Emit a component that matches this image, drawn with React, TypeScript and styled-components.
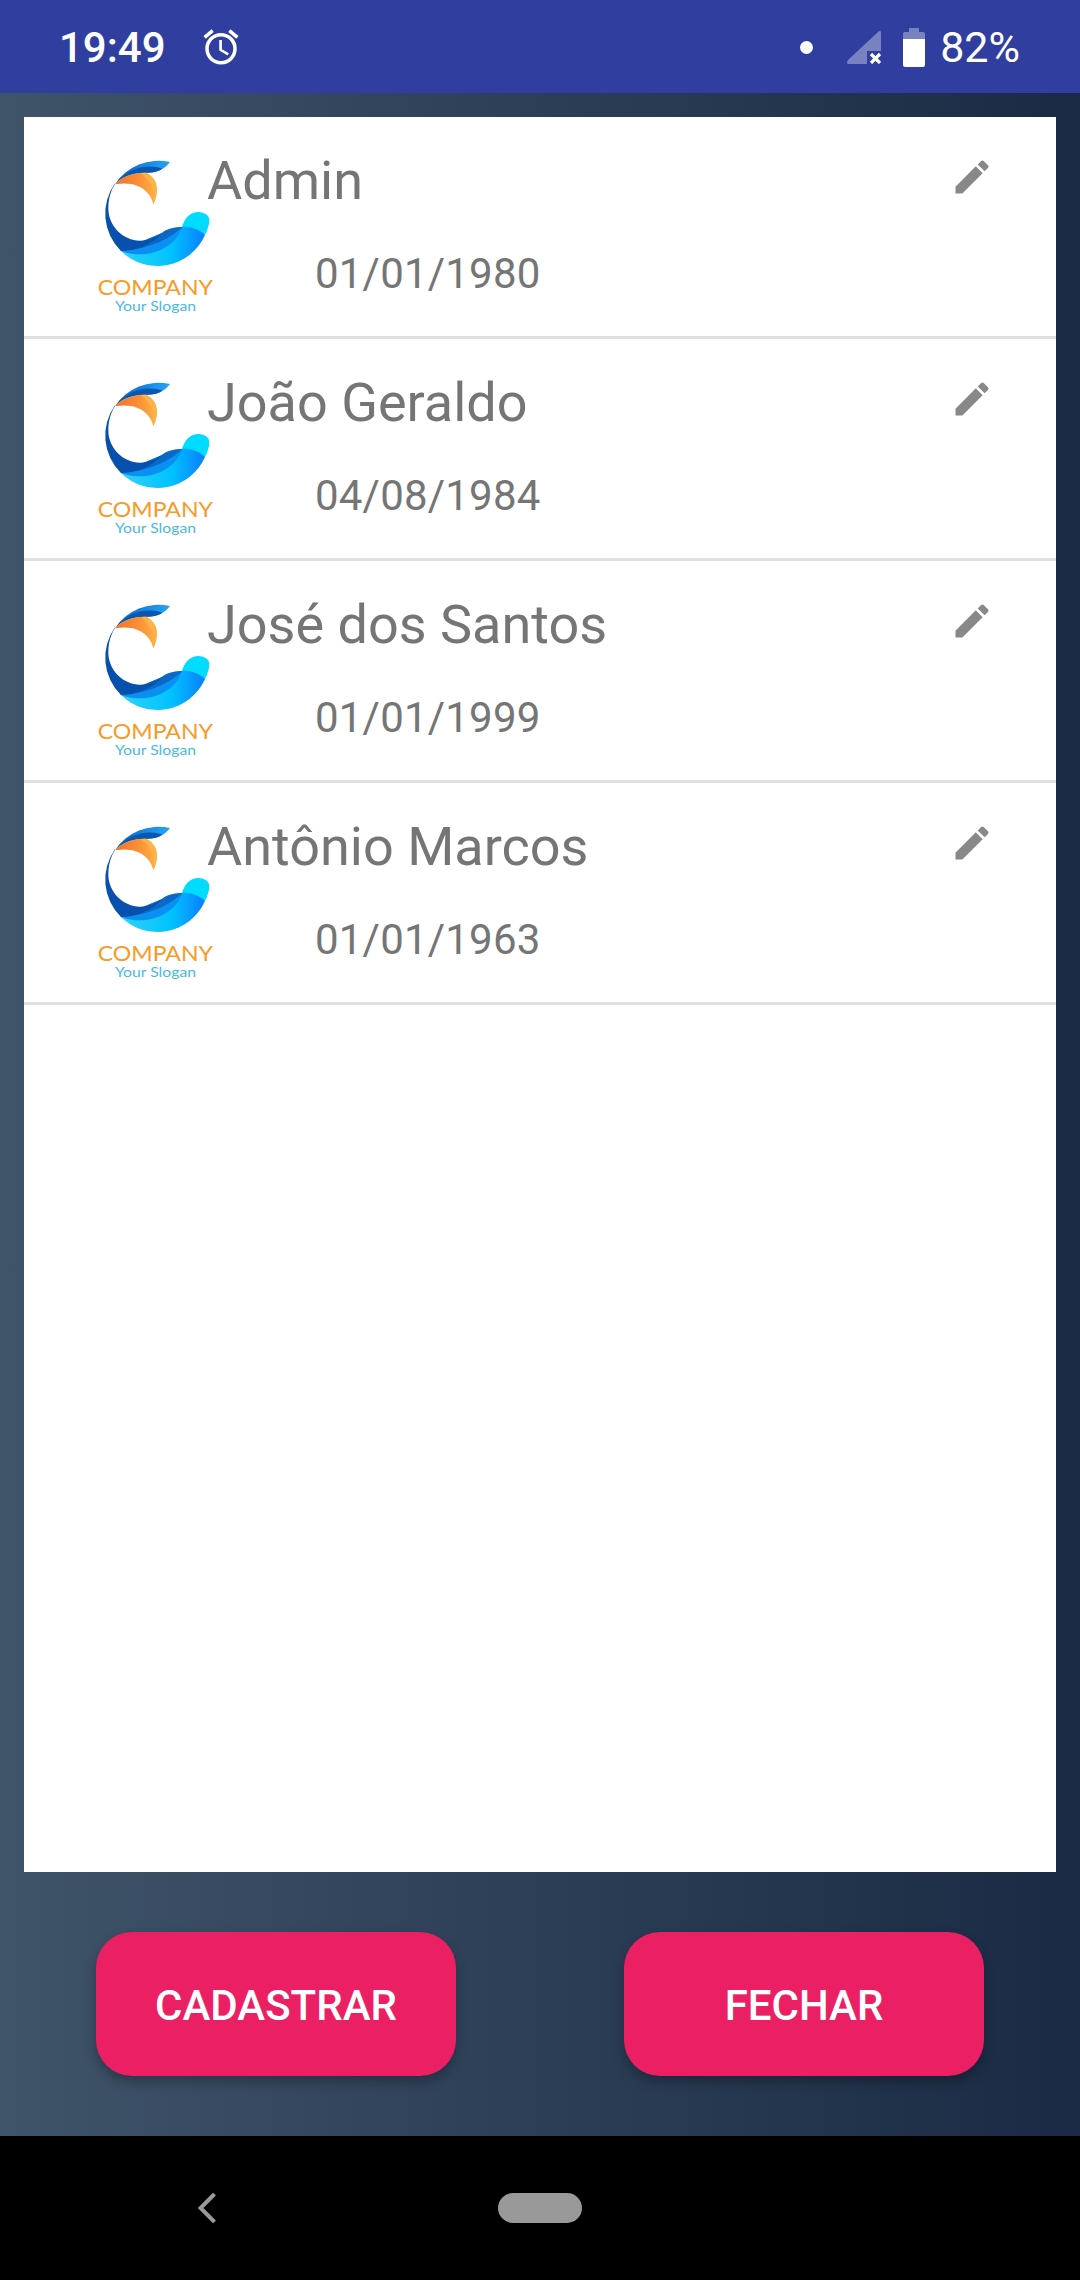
import React from 'react';
import styled, { createGlobalStyle } from 'styled-components';
import { MdAccessAlarm, MdEdit } from 'react-icons/md';

const GlobalStyle = createGlobalStyle`
  html, body {
    margin: 0;
    padding: 0;
    background: #000;
  }
  * {
    box-sizing: border-box;
  }
`;

const Screen = styled.div`
  display: flex;
  flex-direction: column;
  width: 1080px;
  height: 2280px;
  font-family: Roboto, sans-serif;
  overflow: hidden;
`;

const StatusBar = styled.div`
  display: flex;
  flex: none;
  align-items: center;
  justify-content: space-between;
  height: 93px;
  padding: 2px 60px 0 59px;
  background-color: #303f9f;
  color: #fff;
`;

const StatusGroup = styled.div`
  display: flex;
  align-items: center;
`;

const Time = styled.span`
  font-size: 42px;
  font-weight: 500;
  line-height: 49px;
`;

const AlarmIcon = styled(MdAccessAlarm)`
  margin-left: 34px;
  margin-top: -2px;
`;

const Dot = styled.span`
  width: 13px;
  height: 13px;
  margin-right: 34px;
  border-radius: 50%;
  background-color: #fff;
`;

const SignalIcon = styled.svg`
  width: 34px;
  height: 33px;
  margin-right: 22px;
`;

const BatteryIcon = styled.svg`
  width: 22px;
  height: 39px;
  margin-right: 15px;
`;

const Percent = styled.span`
  font-size: 43px;
  line-height: 49px;
`;

const Main = styled.div`
  display: flex;
  flex: 1;
  flex-direction: column;
  padding: 24px 24px 60px;
  background: linear-gradient(90deg, #3f5369 0%, #1a2a44 100%);
`;

const ListCard = styled.div`
  flex: 1;
  background-color: #fff;
`;

const Row = styled.div`
  display: flex;
  height: 222px;
  padding-left: 61px;
  border-bottom: 3px solid #e0e0e0;
`;

const LogoSvg = styled.svg`
  flex: none;
  width: 140px;
  height: 175px;
  margin-top: 28px;
  margin-right: -18px;
`;

const TextColumn = styled.div`
  display: flex;
  flex: 1;
  flex-direction: column;
  padding-top: 32px;
`;

const Name = styled.div`
  color: #757575;
  font-size: 54px;
  line-height: 63px;
`;

const BirthDate = styled.div`
  margin-top: 37px;
  margin-left: 108px;
  color: #757575;
  font-size: 42px;
  letter-spacing: 0.2px;
  line-height: 49px;
`;

const EditIcon = styled(MdEdit)`
  flex: none;
  margin-top: 38px;
  margin-right: 62px;
  color: #888;
`;

const Actions = styled.div`
  display: flex;
  flex: none;
  justify-content: space-between;
  margin-top: 60px;
  padding: 0 72px;
`;

const ActionButton = styled.button`
  width: 360px;
  height: 144px;
  padding: 2px 0 0;
  border: 0;
  border-radius: 36px;
  background-color: #eb2064;
  box-shadow: 0 6px 12px rgba(0, 0, 0, 0.28);
  color: #fff;
  font-family: Roboto, sans-serif;
  font-size: 42px;
  font-weight: 500;
`;

const NavBar = styled.div`
  display: flex;
  flex: none;
  align-items: center;
  height: 144px;
  padding-left: 198px;
  background-color: #000;
`;

const BackIcon = styled.svg`
  width: 18px;
  height: 30px;
`;

const HomePill = styled.div`
  width: 84px;
  height: 30px;
  margin-left: 282px;
  border-radius: 15px;
  background-color: #999;
`;

const users = [
  { name: 'Admin', date: '01/01/1980' },
  { name: 'João Geraldo', date: '04/08/1984' },
  { name: 'José dos Santos', date: '01/01/1999' },
  { name: 'Antônio Marcos', date: '01/01/1963' },
];

function CompanyLogo({ id }: { id: string }) {
  return (
    <LogoSvg viewBox="0 0 420 525">
      <defs>
        <linearGradient id={`${id}-top`} x1="0" y1="0" x2="1" y2="0">
          <stop offset="0" stopColor="#0b5cb4" />
          <stop offset="0.5" stopColor="#1583e0" />
          <stop offset="1" stopColor="#25a5f5" />
        </linearGradient>
        <linearGradient id={`${id}-orange`} x1="0" y1="0" x2="1" y2="0">
          <stop offset="0" stopColor="#f4702b" />
          <stop offset="0.55" stopColor="#f98f35" />
          <stop offset="1" stopColor="#fdb347" />
        </linearGradient>
        <linearGradient id={`${id}-wave`} x1="0" y1="0" x2="1" y2="0">
          <stop offset="0" stopColor="#2fd4f5" />
          <stop offset="0.6" stopColor="#00c2ff" />
          <stop offset="1" stopColor="#0a7eff" />
        </linearGradient>
      </defs>
      <path d="M290 248 C298 222 312 203 338 201 C352 200 373 208 373 225 C373 240 367 256 360 270 Z" fill="#00dcff" />
      <path d="M108 318 A156 156 0 0 0 360 270 C340 252 315 243 290 246 L230 265 Z" fill={`url(#${id}-wave)`} />
      <path d="M108 318 C170 342 262 325 292 247 C265 247 245 252 230 265 Z" fill="#0a90f2" />
      <path d="M105 316 C160 318 235 298 292 247 C265 247 245 252 230 265 Z" fill="#0b68c6" />
      <path
        d="M90 115 A156 156 0 0 0 108 318 C150 318 200 300 232 264 C215 276 195 287 165 287 C115 287 70 245 70 190 C70 160 78 135 90 118 Z"
        fill="#0750ae"
      />
      <path
        d="M255 51 A156 156 0 0 0 90 118 C110 95 145 82 182 83 C215 84 238 74 255 51 Z"
        fill={`url(#${id}-top)`}
      />
      <path d="M232 71 C195 58 140 62 94 112 C115 92 148 83 182 83 C202 84 220 79 232 71 Z" fill="#0b56b0" />
      <path
        d="M90 118 C110 95 145 82 182 83 C212 95 228 130 205 178 C198 145 165 105 90 118 Z"
        fill={`url(#${id}-orange)`}
      />
      <path d="M182 83 C212 95 228 130 205 178 C212 140 200 105 165 84 Z" fill="#fdb347" />
      <text
        x="38"
        y="449"
        textLength="346"
        lengthAdjust="spacingAndGlyphs"
        fill="#f99a26"
        fontFamily="Lato, sans-serif"
        fontSize="64"
      >
        COMPANY
      </text>
      <text
        x="90"
        y="499"
        textLength="243"
        lengthAdjust="spacingAndGlyphs"
        fill="#4ab9e2"
        fontFamily="Lato, sans-serif"
        fontSize="39"
      >
        Your Slogan
      </text>
    </LogoSvg>
  );
}

function App() {
  return (
    <Screen>
      <GlobalStyle />
      <StatusBar>
        <StatusGroup>
          <Time>19:49</Time>
          <AlarmIcon size={42} />
        </StatusGroup>
        <StatusGroup>
          <Dot />
          <SignalIcon viewBox="0 0 34 33">
            <path
              d="M33 0 Q34 0 34 1 L34 20 L20 20 L20 33 L1 33 Q-1 32 1 29 L31 1 Q32 0 33 0 Z"
              fill="#fff"
              fillOpacity="0.35"
            />
            <path d="M24 23 L33 32 M33 23 L24 32" stroke="#fff" strokeWidth="3.2" />
          </SignalIcon>
          <BatteryIcon viewBox="0 0 22 39">
            <path d="M6 0 H16 V4 H20 Q22 4 22 6 V11 H0 V6 Q0 4 2 4 H6 Z" fill="#fff" fillOpacity="0.35" />
            <path d="M0 11 H22 V37 Q22 39 20 39 H2 Q0 39 0 37 Z" fill="#fff" />
          </BatteryIcon>
          <Percent>82%</Percent>
        </StatusGroup>
      </StatusBar>

      <Main>
        <ListCard>
          {users.map((user, index) => (
            <Row key={user.name}>
              <CompanyLogo id={`logo-${index}`} />
              <TextColumn>
                <Name>{user.name}</Name>
                <BirthDate>{user.date}</BirthDate>
              </TextColumn>
              <EditIcon size={44} />
            </Row>
          ))}
        </ListCard>
        <Actions>
          <ActionButton>CADASTRAR</ActionButton>
          <ActionButton>FECHAR</ActionButton>
        </Actions>
      </Main>

      <NavBar>
        <BackIcon viewBox="0 0 18 30">
          <path d="M16.5 1 L2.5 15 L16.5 29" fill="none" stroke="#999" strokeWidth="4" />
        </BackIcon>
        <HomePill />
      </NavBar>
    </Screen>
  );
}

export default App;
